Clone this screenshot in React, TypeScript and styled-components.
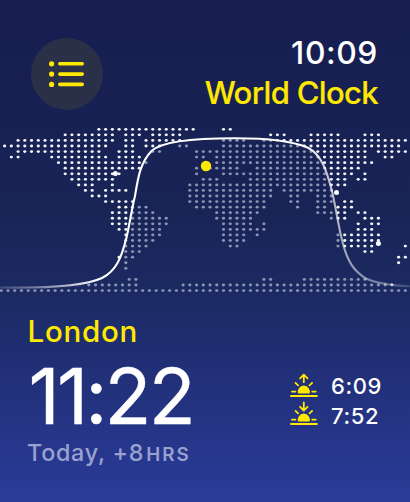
import styled, { createGlobalStyle } from 'styled-components';

const GlobalStyle = createGlobalStyle`
  * {
    box-sizing: border-box;
  }

  body {
    margin: 0;
    background: #171d51;
    font-family: Inter, 'Liberation Sans', sans-serif;
  }
`;

const YELLOW = '#ffe900';

const DOT_PITCH_X = 6.735;
const DOT_PITCH_Y = 5.56;
const MAP_TOP = 129.3;

type Range = [number, number];

interface DotRow {
  row: number;
  west?: Range[];
  east?: Range[];
}

// The western and eastern halves sit on grids that are half a column apart.
const dotRows: DotRow[] = [
  { row: 0, west: [[14, 28]], east: [[33, 34]] },
  { row: 1, west: [[9, 16], [18, 20], [22, 26]], east: [[40, 42], [46, 50], [54, 56]] },
  { row: 2, west: [[2, 16], [18, 19], [21, 26]], east: [[33, 36], [39, 60]] },
  { row: 3, west: [[0, 15], [18, 19], [21, 23], [26, 27]], east: [[33, 59]] },
  { row: 4, west: [[2, 14], [17, 19], [22, 23]], east: [[29, 54], [56, 60]] },
  { row: 5, west: [[1, 2], [7, 15], [17, 20]], east: [[29, 30], [32, 54], [57, 58]] },
  { row: 6, west: [[8, 21]], east: [[32, 55]] },
  { row: 7, west: [[9, 20]], east: [[29, 29], [31, 35], [38, 53]] },
  { row: 8, west: [[9, 17]], east: [[29, 29], [33, 52], [54, 54]] },
  { row: 9, west: [[10, 16]], east: [[30, 32], [37, 51], [53, 54]] },
  { row: 10, west: [[11, 13], [16, 16]], east: [[28, 51]] },
  { row: 11, west: [[12, 13], [15, 18]], east: [[28, 40], [42, 49]] },
  { row: 12, west: [[13, 15]], east: [[28, 40], [43, 44], [47, 49]] },
  { row: 13, west: [[15, 19]], east: [[28, 39], [43, 44], [47, 49], [51, 52]] },
  { row: 14, west: [[17, 21]], east: [[29, 39], [44, 44], [47, 48], [50, 52]] },
  { row: 15, west: [[16, 22]], east: [[32, 38], [47, 51], [53, 54]] },
  { row: 16, west: [[16, 24]], east: [[32, 37], [49, 51], [54, 56]] },
  { row: 17, west: [[16, 24]], east: [[33, 37], [39, 39], [53, 53], [55, 56]] },
  { row: 18, west: [[17, 23]], east: [[33, 39], [53, 55]] },
  { row: 19, west: [[18, 23]], east: [[33, 36], [38, 38], [50, 56]] },
  { row: 20, west: [[18, 22]], east: [[33, 36], [50, 56]] },
  { row: 21, west: [[18, 21]], east: [[34, 35], [50, 55], [60, 60]] },
  { row: 22, west: [[18, 20]], east: [[54, 55]] },
  { row: 23, west: [[17, 19]], east: [[59, 60]] },
  { row: 24, west: [[18, 18]], east: [[59, 59]] },
  { row: 25, west: [[18, 18]] },
  { row: 27, east: [[19, 20], [39, 40], [45, 54]] },
  { row: 28, east: [[13, 20], [27, 58]] },
  { row: 29, east: [[0, 60]] },
];

const expand = (ranges: Range[] = [], offset: number) =>
  ranges.flatMap(([from, to]) =>
    Array.from({ length: to - from + 1 }, (_, i) => offset + (from + i) * DOT_PITCH_X),
  );

const dots = dotRows.flatMap(({ row, west, east }) =>
  [...expand(west, 4.6), ...expand(east, 1.25)].map((x) => ({
    x,
    y: MAP_TOP + row * DOT_PITCH_Y,
  })),
);

const DAYLIGHT_CURVE =
  'M0 287.5 C60 288.5 88 284.5 102 278 C116 271 121.5 258 126.7 236.7 C130 222 132 208 135 196 C138 178 140 163 151.5 151 C160 143 185 138.3 235 138.3 C275 138.3 296 142.5 308 147.8 C322 155 327 172 331.7 190 C336 207 338 226 343.3 245 C348 262 354 271 366 278.5 C378 284 392 285.5 410 286.3';

const cities = [
  { x: 115.4, y: 173.5 },
  { x: 336.5, y: 192.4 },
  { x: 378.4, y: 243.4 },
];

const Screen = styled.main`
  display: flex;
  flex-direction: column;
  width: 410px;
  height: 502px;
  overflow: hidden;
  background: linear-gradient(#171d50 0%, #192456 42%, #1b2a62 58%, #22317b 77%, #2b3b99 100%);
`;

const Header = styled.header`
  display: flex;
  justify-content: space-between;
  height: 120px;
  padding: 38px 32px 0 31px;
`;

const MenuButton = styled.button`
  display: flex;
  align-items: center;
  justify-content: center;
  width: 72px;
  height: 72px;
  padding: 0;
  border: 0;
  border-radius: 50%;
  background: #2b3049;
`;

const Titles = styled.div`
  display: flex;
  flex-direction: column;
  align-items: flex-end;
  white-space: nowrap;
`;

const Clock = styled.time`
  height: 35px;
  margin-top: -5px;
  color: #fff;
  font-size: 31.8px;
  font-weight: 500;
  line-height: 40px;
  letter-spacing: 0.6px;
`;

const AppTitle = styled.h1`
  margin: 5px 0 0;
  color: ${YELLOW};
  font-size: 31px;
  font-weight: 500;
  line-height: 40px;
  letter-spacing: -0.65px;
  -webkit-text-stroke-width: 0.15px;
`;

const Map = styled.svg`
  display: block;
  flex: none;
  width: 410px;
  height: 180px;
`;

const Details = styled.section`
  display: flex;
  justify-content: space-between;
  padding: 11px 28px 0 27px;
  white-space: nowrap;
`;

const City = styled.div`
  display: flex;
  flex-direction: column;
`;

const CityName = styled.h2`
  margin: 0 0 0 0.5px;
  color: ${YELLOW};
  font-size: 29.5px;
  font-weight: 500;
  line-height: 40px;
  letter-spacing: 0.75px;
`;

const CityTime = styled.time`
  height: 88px;
  margin: 1px 0 0 1.5px;
  color: #fff;
  font-size: 77px;
  font-weight: 400;
  line-height: 88px;
  letter-spacing: -2.9px;
  -webkit-text-stroke-width: 0.3px;
`;

const Offset = styled.p`
  margin: 0;
  color: #98a1d0;
  font-size: 23.3px;
  font-weight: 500;
  line-height: 26px;
  letter-spacing: 0.75px;
`;

const Unit = styled.span`
  margin-left: 2px;
  font-size: 18.8px;
  font-weight: 600;
  letter-spacing: 2px;
`;

const SunTimes = styled.div`
  display: flex;
  gap: 13px;
  padding-top: 60px;
`;

const SunIcons = styled.div`
  display: flex;
  flex-direction: column;
  gap: 2px;
  padding-top: 1px;
`;

const SunLabels = styled.div`
  display: flex;
  flex-direction: column;
  color: #fff;
  font-size: 22px;
  font-weight: 500;
  line-height: 30px;
  letter-spacing: 0.6px;
`;

function ListIcon() {
  return (
    <svg width="36" height="28" viewBox="0 0 36 28" fill={YELLOW}>
      {[3.8, 14.1, 24.4].map((y) => (
        <g key={y}>
          <circle cx="2.6" cy={y} r="2.6" />
          <rect x="9" y={y - 1.8} width="26" height="3.6" rx="1.8" />
        </g>
      ))}
    </svg>
  );
}

function SunIcon({ direction }: { direction: 'up' | 'down' }) {
  return (
    <svg width="28" height="26" viewBox="0 0 28 26" fill="none" stroke={YELLOW} strokeWidth="1.8" strokeLinecap="round" strokeLinejoin="round">
      <path d="M.9 24H26.9M1.9 19.6H5.4M22.2 19.6H25.7M5.5 10.9L8.1 13.4M22.1 10.9L19.5 13.4" />
      <path d={direction === 'up' ? 'M13.8 10.2V2.7M10.1 6.4L13.8 2.7L17.5 6.4' : 'M13.8 2.5V10.3M10.1 6.8L13.8 10.5L17.5 6.8'} />
      <path d="M8 21.6A6.1 6.1 0 1 1 19.6 21.6Z" fill={YELLOW} stroke="none" />
    </svg>
  );
}

function WorldMap() {
  const dotShapes = dots.map(({ x, y }) => (
    <ellipse key={`${x}-${y}`} cx={x} cy={y} rx="1.6" ry="1.4" />
  ));

  return (
    <Map viewBox="0 120 410 180">
      <defs>
        <linearGradient id="curve" gradientUnits="userSpaceOnUse" x1="0" y1="0" x2="410" y2="0">
          <stop offset="0" stopColor="#fff" stopOpacity="0.15" />
          <stop offset="0.12" stopColor="#fff" stopOpacity="0.5" />
          <stop offset="0.24" stopColor="#fff" />
          <stop offset="0.74" stopColor="#fff" />
          <stop offset="0.82" stopColor="#fff" stopOpacity="0.65" />
          <stop offset="0.9" stopColor="#fff" stopOpacity="0.45" />
          <stop offset="1" stopColor="#fff" stopOpacity="0.15" />
        </linearGradient>
        <clipPath id="above">
          <path d={`${DAYLIGHT_CURVE} V120 H0 Z`} />
        </clipPath>
        <clipPath id="below">
          <path d={`${DAYLIGHT_CURVE} V300 H0 Z`} />
        </clipPath>
      </defs>
      <g fill="#8d95b5" clipPath="url(#below)">{dotShapes}</g>
      <g fill="#f4f5fa" clipPath="url(#above)">{dotShapes}</g>
      <path d={DAYLIGHT_CURVE} fill="none" stroke="url(#curve)" strokeWidth="2.1" />
      {cities.map(({ x, y }) => (
        <circle key={x} cx={x} cy={y} r="2.5" fill="#fff" />
      ))}
      <circle cx="206" cy="166" r="5.2" fill={YELLOW} />
    </Map>
  );
}

function App() {
  return (
    <>
      <GlobalStyle />
      <Screen>
        <Header>
          <MenuButton aria-label="Menu">
            <ListIcon />
          </MenuButton>
          <Titles>
            <Clock>10:09</Clock>
            <AppTitle>World Clock</AppTitle>
          </Titles>
        </Header>
        <WorldMap />
        <Details>
          <City>
            <CityName>London</CityName>
            <CityTime>11:22</CityTime>
            <Offset>
              Today, +8<Unit>HRS</Unit>
            </Offset>
          </City>
          <SunTimes>
            <SunIcons>
              <SunIcon direction="up" />
              <SunIcon direction="down" />
            </SunIcons>
            <SunLabels>
              <time>6:09</time>
              <time>7:52</time>
            </SunLabels>
          </SunTimes>
        </Details>
      </Screen>
    </>
  );
}

export default App;
